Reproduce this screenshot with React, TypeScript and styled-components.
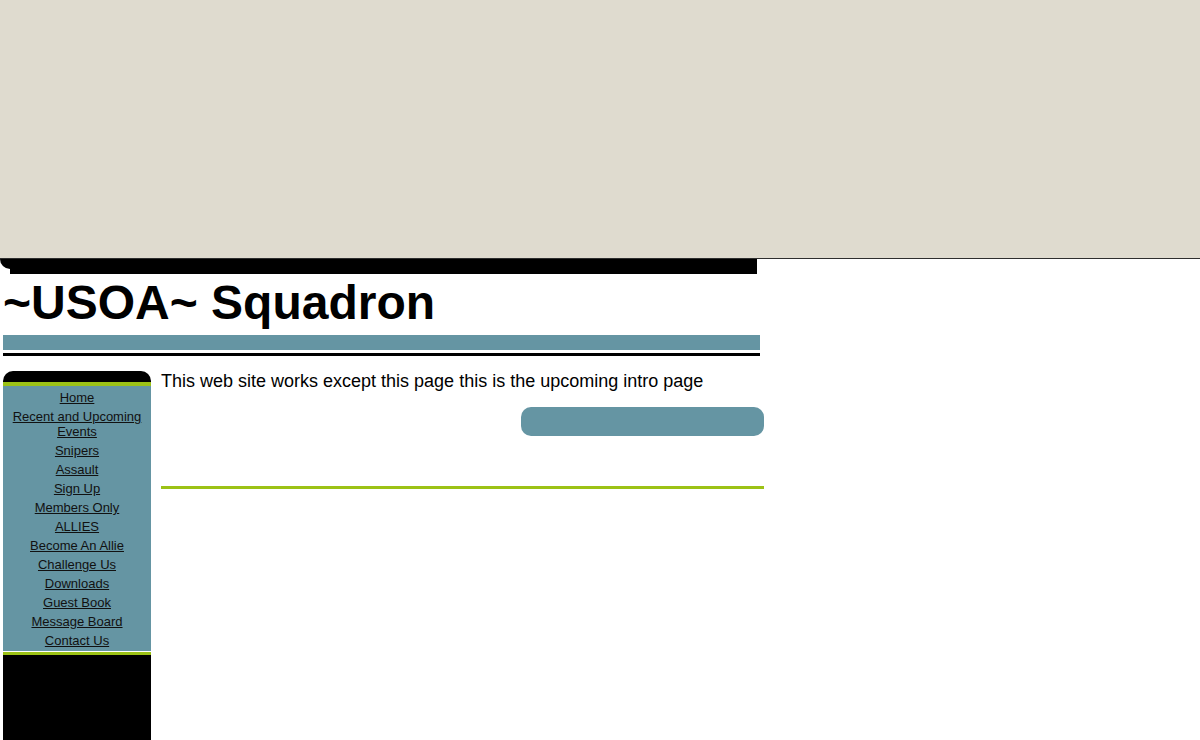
import React from "react";
import styled, { createGlobalStyle } from "styled-components";

const GlobalStyle = createGlobalStyle`
  html, body { margin: 0; padding: 0; background: #ffffff; }
  body { font-family: "Liberation Sans", Arial, sans-serif; color: #000; }
`;

const Banner = styled.div`
  height: 258px;
  background: #dfdbcf;
  border-bottom: 1px solid #2e2e2e;
`;

const Strip = styled.div`
  display: flex;
  align-items: flex-start;
  width: 757px;
`;

const StripCorner = styled.div`
  width: 10px;
  height: 10px;
  background: #000;
  border-bottom-left-radius: 10px;
`;

const StripBar = styled.div`
  flex: 1;
  height: 15px;
  background: #000;
`;

const Title = styled.h1`
  margin: 1px 0 5px 3px;
  font-family: "Liberation Sans", Arial, sans-serif;
  font-size: 48px;
  font-weight: bold;
  line-height: 55px;
  color: #000;
`;

const Rule = styled.div<{ $color: string; $h: number; $mt?: number }>`
  margin: ${(p) => p.$mt ?? 0}px 0 0 3px;
  width: 757px;
  height: ${(p) => p.$h}px;
  background: ${(p) => p.$color};
`;

const Columns = styled.div`
  display: flex;
  align-items: flex-start;
  gap: 10px;
  padding-left: 3px;
  margin-top: 15px;
`;

const Sidebar = styled.div`
  width: 148px;
  display: flex;
  flex-direction: column;
`;

const SideCap = styled.div`
  height: 11px;
  background: #000;
  border-radius: 10px 10px 0 0;
`;

const GreenLine = styled.div<{ $h: number; $mt?: number }>`
  height: ${(p) => p.$h}px;
  margin-top: ${(p) => p.$mt ?? 0}px;
  background: #9cc216;
`;

const Nav = styled.nav`
  background: #6595a3;
  padding: 4px 0 3px;
  display: flex;
  flex-direction: column;
  gap: 4px;
  text-align: center;
`;

const NavLink = styled.a`
  font-family: "Liberation Sans", Arial, sans-serif;
  font-size: 13px;
  line-height: 15px;
  color: #111;
  text-decoration: underline;
  cursor: pointer;
`;

const SideFoot = styled.div`
  height: 90px;
  background: #000;
`;

const Main = styled.div`
  width: 603px;
  display: flex;
  flex-direction: column;
`;

const Intro = styled.p`
  margin: 0;
  font-size: 18px;
  line-height: 21px;
  color: #000;
`;

const Pill = styled.div`
  align-self: flex-end;
  width: 243px;
  height: 29px;
  margin-top: 15px;
  background: #6595a3;
  border-radius: 10px;
`;

const MainRule = styled.div`
  margin-top: 50px;
  height: 3px;
  background: #9cc216;
`;

const links = [
  "Home",
  "Recent and Upcoming Events",
  "Snipers",
  "Assault",
  "Sign Up",
  "Members Only",
  "ALLIES",
  "Become An Allie",
  "Challenge Us",
  "Downloads",
  "Guest Book",
  "Message Board",
  "Contact Us",
];

export default function App() {
  return (
    <>
      <GlobalStyle />
      <Banner />
      <Strip>
        <StripCorner />
        <StripBar />
      </Strip>
      <Title>~USOA~ Squadron</Title>
      <Rule $color="#6595a3" $h={15} />
      <Rule $color="#000" $h={3} $mt={3} />
      <Columns>
        <Sidebar>
          <SideCap />
          <GreenLine $h={4} />
          <Nav>
            {links.map((l) => (
              <NavLink key={l}>{l}</NavLink>
            ))}
          </Nav>
          <GreenLine $h={3} $mt={1} />
          <SideFoot />
        </Sidebar>
        <Main>
          <Intro>This web site works except this page this is the upcoming intro page</Intro>
          <Pill />
          <MainRule />
        </Main>
      </Columns>
    </>
  );
}
